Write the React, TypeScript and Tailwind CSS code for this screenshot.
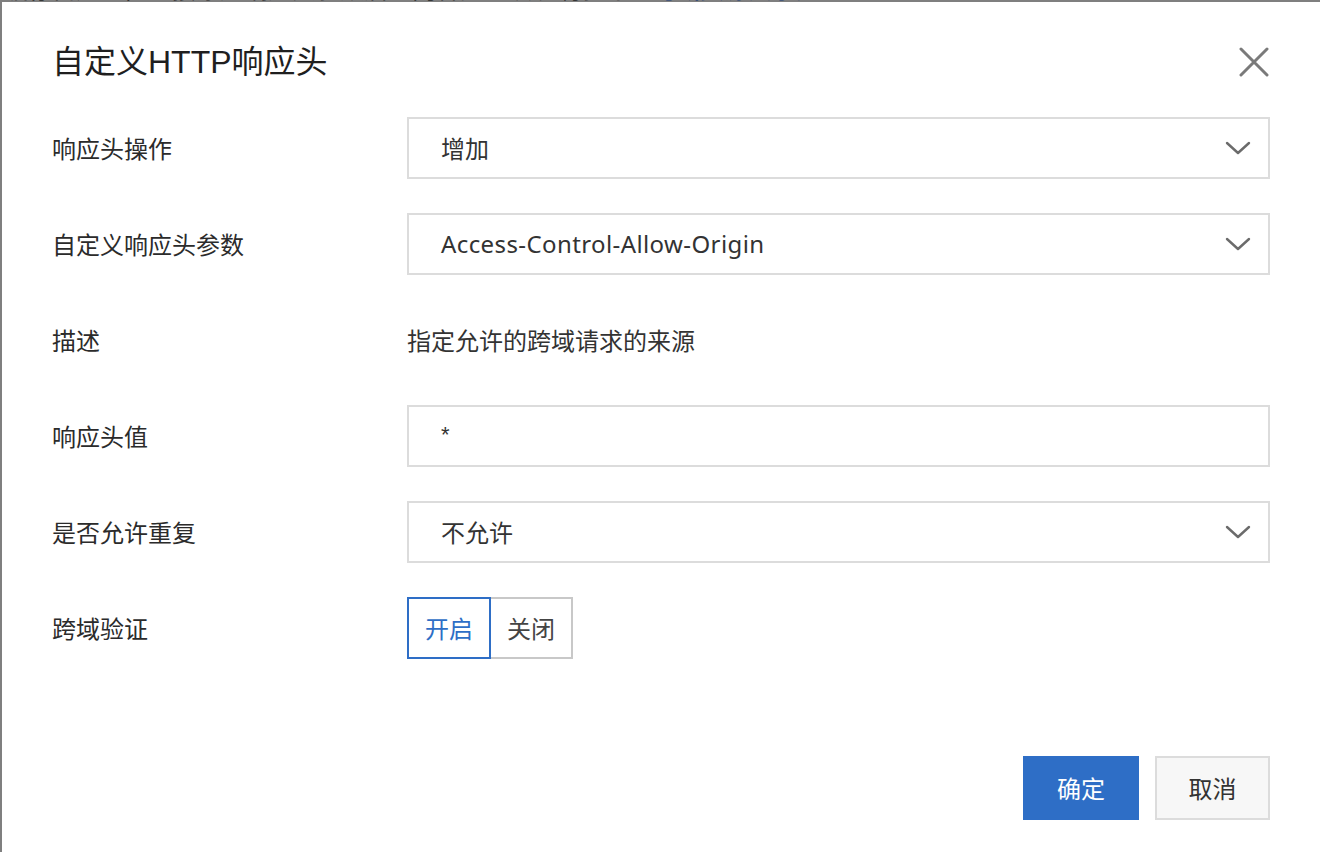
import React from "react";

const cjk = '"Noto Sans CJK SC", sans-serif';

function Chevron() {
  return (
    <svg width="26" height="16" viewBox="0 0 26 16" fill="none" className="shrink-0">
      <path d="M2 3 L13 13 L24 3" stroke="#6b6b6b" strokeWidth="2.4" strokeLinecap="round" strokeLinejoin="round" />
    </svg>
  );
}

function CloseIcon() {
  return (
    <svg width="30" height="30" viewBox="0 0 30 30" fill="none">
      <path d="M2 2 L28 28 M28 2 L2 28" stroke="#7a7a7a" strokeWidth="3" strokeLinecap="round" />
    </svg>
  );
}

function Row({ label, children }: { label: string; children: React.ReactNode }) {
  return (
    <div className="flex items-center h-[62px]">
      <div className="w-[354px] shrink-0 text-[24px] text-[#2b2b2b] -ml-[1px]">{label}</div>
      <div className="flex-1 flex items-center h-full ml-[1px]">{children}</div>
    </div>
  );
}

function SelectBox({ value, latin }: { value: string; latin?: boolean }) {
  return (
    <div className="flex-1 h-full flex items-center justify-between border-2 border-[#dcdcdc] bg-white pl-[32px] pr-[17px]">
      <span
        className={latin ? "text-[24px] tracking-[0.4px] text-[#333]" : "text-[24px] text-[#333]"}
        style={latin ? { fontFamily: '"Noto Sans", "Noto Sans CJK SC", sans-serif' } : undefined}
      >
        {value}
      </span>
      <Chevron />
    </div>
  );
}

export default function App() {
  return (
    <div className="w-[1320px] h-[852px] bg-[#7f7f7f] overflow-hidden flex flex-col" style={{ fontFamily: cjk }}>
      {/* page content behind the overlay, only its last pixels show */}
      <div className="h-[2px] overflow-hidden shrink-0">
        <div className="-mt-[26px] pl-[4px] flex items-end h-[28px] text-[24px] leading-[28px] whitespace-nowrap">
          <span className="text-[#262626]">缓存自定义，直接添加响应头参数后的内容配置项说明参考</span>
          <span className="ml-[24px] text-[#173a78]">跨域资源共享配置</span>
        </div>
      </div>
      <div className="flex-1 flex">
        <div className="w-[2px] shrink-0" />
        <div className="flex-1 bg-white flex flex-col pl-[51px] pr-[50px] pt-[40px] pb-[32px]">
          <div className="flex items-center justify-between h-[40px]">
            <h1
              className="text-[32px] text-[#1f1f1f] font-normal leading-[40px] -ml-[1px]"
              style={{ fontFamily: '"Liberation Sans", "Noto Sans CJK SC", sans-serif' }}
            >
              自定义HTTP响应头
            </h1>
            <button className="mr-[1px] flex items-center justify-center">
              <CloseIcon />
            </button>
          </div>

          <div className="mt-[35px] flex flex-col gap-[34px]">
            <Row label="响应头操作">
              <SelectBox value="增加" />
            </Row>
            <Row label="自定义响应头参数">
              <SelectBox value="Access-Control-Allow-Origin" latin />
            </Row>
            <Row label="描述">
              <span className="text-[24px] text-[#333]">指定允许的跨域请求的来源</span>
            </Row>
            <Row label="响应头值">
              <div className="flex-1 h-full flex items-center border-2 border-[#dcdcdc] bg-white pl-[32px]">
                <span className="text-[22px] text-[#333] -mt-[4px]" style={{ fontFamily: '"Liberation Sans", sans-serif' }}>
                  *
                </span>
              </div>
            </Row>
            <Row label="是否允许重复">
              <SelectBox value="不允许" />
            </Row>
            <Row label="跨域验证">
              <div className="flex h-full">
                <button className="w-[84px] h-full border-2 border-[#2e6ec6] text-[24px] text-[#2e6ec6] bg-white">
                  开启
                </button>
                <button className="w-[82px] h-full border-2 border-l-0 border-[#c8c8c8] text-[24px] text-[#444] bg-white">
                  关闭
                </button>
              </div>
            </Row>
          </div>

          <div className="mt-auto flex justify-end gap-[16px]">
            <button className="w-[116px] h-[64px] bg-[#2e6ec6] text-white text-[24px]">确定</button>
            <button className="w-[115px] h-[64px] bg-[#f7f7f7] border-2 border-[#dcdcdc] text-[#333] text-[24px]">
              取消
            </button>
          </div>
        </div>
      </div>
    </div>
  );
}
